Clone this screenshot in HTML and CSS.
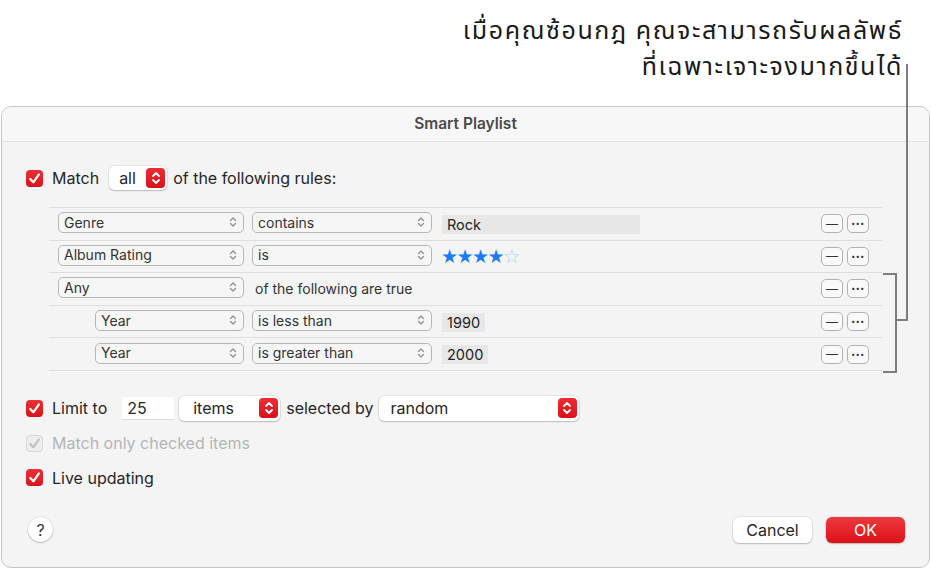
FILE: index.html
```html
<!DOCTYPE html>
<html lang="th">
  <head>
    <meta charset="UTF-8" />
    <meta name="viewport" content="width=device-width, initial-scale=1.0" />
    <title>Smart Playlist</title>
    <link rel="stylesheet" href="styles.css">
  </head>
  <body>
    <div class="callout">
      <div>เมื่อคุณซ้อนกฎ คุณจะสามารถรับผลลัพธ์</div>
      <div>ที่เฉพาะเจาะจงมากขึ้นได้</div>
    </div>

    <!-- เส้นชี้ + วงเล็บกลุ่มกฎ -->
    <div class="leader"></div>
    <div class="leader-foot"></div>
    <div class="bracket"></div>

    <div class="dialog">
      <div class="titlebar">Smart Playlist</div>

      <div class="body">
        <div class="line">
          <span class="check"><svg viewBox="0 0 18 18"><path d="M4.5 9.5 L7.8 13 L13.5 4.8" /></svg></span>
          <span class="label">Match</span>
          <span class="menu menu-all">all<span class="stepper"><svg viewBox="0 0 10 14"><path d="M2 5 L5 2 L8 5 M2 9 L5 12 L8 9" /></svg></span></span>
          <span class="label">of the following rules:</span>
        </div>

        <div class="rules">
          <div class="rule">
            <span class="popup w-field">Genre<svg viewBox="0 0 8 12"><path d="M1.5 4.5 L4 2 L6.5 4.5 M1.5 7.5 L4 10 L6.5 7.5" /></svg></span>
            <span class="popup w-op">contains<svg viewBox="0 0 8 12"><path d="M1.5 4.5 L4 2 L6.5 4.5 M1.5 7.5 L4 10 L6.5 7.5" /></svg></span>
            <span class="value value-wide">Rock</span>
            <span class="actions"><span class="mini">&#8212;</span><span class="mini dots">&#8226;&#8226;&#8226;</span></span>
          </div>
          <div class="rule">
            <span class="popup w-field">Album Rating<svg viewBox="0 0 8 12"><path d="M1.5 4.5 L4 2 L6.5 4.5 M1.5 7.5 L4 10 L6.5 7.5" /></svg></span>
            <span class="popup w-op">is<svg viewBox="0 0 8 12"><path d="M1.5 4.5 L4 2 L6.5 4.5 M1.5 7.5 L4 10 L6.5 7.5" /></svg></span>
            <span class="stars">★★★★<span class="off">☆</span></span>
            <span class="actions"><span class="mini">&#8212;</span><span class="mini dots">&#8226;&#8226;&#8226;</span></span>
          </div>
          <div class="rule">
            <span class="popup w-field">Any<svg viewBox="0 0 8 12"><path d="M1.5 4.5 L4 2 L6.5 4.5 M1.5 7.5 L4 10 L6.5 7.5" /></svg></span>
            <span class="plain">of the following are true</span>
            <span class="actions"><span class="mini">&#8212;</span><span class="mini dots">&#8226;&#8226;&#8226;</span></span>
          </div>
          <div class="rule nested">
            <span class="popup w-sub">Year<svg viewBox="0 0 8 12"><path d="M1.5 4.5 L4 2 L6.5 4.5 M1.5 7.5 L4 10 L6.5 7.5" /></svg></span>
            <span class="popup w-op">is less than<svg viewBox="0 0 8 12"><path d="M1.5 4.5 L4 2 L6.5 4.5 M1.5 7.5 L4 10 L6.5 7.5" /></svg></span>
            <span class="value">1990</span>
            <span class="actions"><span class="mini">&#8212;</span><span class="mini dots">&#8226;&#8226;&#8226;</span></span>
          </div>
          <div class="rule nested">
            <span class="popup w-sub">Year<svg viewBox="0 0 8 12"><path d="M1.5 4.5 L4 2 L6.5 4.5 M1.5 7.5 L4 10 L6.5 7.5" /></svg></span>
            <span class="popup w-op">is greater than<svg viewBox="0 0 8 12"><path d="M1.5 4.5 L4 2 L6.5 4.5 M1.5 7.5 L4 10 L6.5 7.5" /></svg></span>
            <span class="value">2000</span>
            <span class="actions"><span class="mini">&#8212;</span><span class="mini dots">&#8226;&#8226;&#8226;</span></span>
          </div>
        </div>

        <div class="line limit">
          <span class="check"><svg viewBox="0 0 18 18"><path d="M4.5 9.5 L7.8 13 L13.5 4.8" /></svg></span>
          <span class="label">Limit to</span>
          <span class="input">25</span>
          <span class="menu menu-items">items<span class="stepper"><svg viewBox="0 0 10 14"><path d="M2 5 L5 2 L8 5 M2 9 L5 12 L8 9" /></svg></span></span>
          <span class="label">selected by</span>
          <span class="menu menu-random">random<span class="stepper"><svg viewBox="0 0 10 14"><path d="M2 5 L5 2 L8 5 M2 9 L5 12 L8 9" /></svg></span></span>
        </div>

        <div class="line option disabled">
          <span class="check"><svg viewBox="0 0 18 18"><path d="M4.5 9.5 L7.8 13 L13.5 4.8" /></svg></span>
          <span class="label">Match only checked items</span>
        </div>

        <div class="line option">
          <span class="check"><svg viewBox="0 0 18 18"><path d="M4.5 9.5 L7.8 13 L13.5 4.8" /></svg></span>
          <span class="label">Live updating</span>
        </div>

        <div class="footer">
          <span class="help">?</span>
          <div class="buttons">
            <span class="btn">Cancel</span>
            <span class="btn btn-ok">OK</span>
          </div>
        </div>
      </div>
    </div>
  </body>
</html>
```

FILE: styles.css
```css
body {
  margin: 0;
  width: 931px;
  height: 569px;
  background: #ffffff;
  font-family: "Inter", "Liberation Sans", sans-serif;
  color: #262626;
  overflow: hidden;
  position: relative;
}

/* 설명 문구 */
.callout {
  box-sizing: border-box;
  height: 106px;
  padding: 13px 28px 0 0;
  display: flex;
  flex-direction: column;
  align-items: flex-end;
  font-family: "Noto Sans Thai", "Noto Sans", "DejaVu Sans", sans-serif;
  font-size: 25px;
  line-height: 36px;
  letter-spacing: 1.6px;
  color: #1a1a1a;
}

/* 주석 선 (콘텐츠 위에 겹침) */
.leader {
  position: absolute;
  left: 906px;
  top: 64px;
  width: 2px;
  height: 257px;
  background: #7d7d7d;
}

.leader-foot {
  position: absolute;
  left: 895px;
  top: 319px;
  width: 13px;
  height: 2px;
  background: #7d7d7d;
}

.bracket {
  position: absolute;
  left: 883px;
  top: 273px;
  width: 12px;
  height: 96px;
  border: 2px solid #7d7d7d;
  border-left: none;
}

.dialog {
  box-sizing: border-box;
  margin: 0 1px;
  height: 462px;
  border: 1px solid #c6c6c6;
  border-radius: 10px;
  background: #f4f4f4;
  overflow: hidden;
}

.titlebar {
  height: 34px;
  line-height: 33px;
  border-bottom: 1px solid #e1e1e1;
  background: #f7f7f7;
  text-align: center;
  font-size: 15.5px;
  font-weight: 600;
  color: #4a4a4a;
}

.body {
  padding: 0 24px;
  font-size: 16px;
}

.line {
  display: flex;
  align-items: center;
  height: 24px;
  margin-top: 24px;
}

.line.limit {
  height: 25px;
  margin-top: 25px;
}

.line.option {
  margin-top: 10.5px;
}

.check {
  width: 17px;
  height: 17px;
  border-radius: 4px;
  background: linear-gradient(#ec3036, #d9141c);
  display: flex;
  margin-right: 9px;
  flex-shrink: 0;
}

.check svg {
  width: 17px;
  height: 17px;
  fill: none;
  stroke: #fff;
  stroke-width: 2.4;
  stroke-linecap: round;
  stroke-linejoin: round;
}

.disabled .check {
  box-sizing: border-box;
  background: #ededed;
  border: 1px solid #d8d8d8;
}

.disabled .check svg {
  stroke: #c2c2c2;
  margin: -1px;
}

.disabled .label {
  color: #b4b4b4;
}

.label {
  white-space: nowrap;
}

/* 빨간 스테퍼가 있는 흰 메뉴 */
.menu {
  box-sizing: border-box;
  display: flex;
  align-items: center;
  justify-content: space-between;
  height: 24px;
  padding: 0 2px 0 10px;
  margin: 0 6px;
  background: #ffffff;
  border-radius: 5px;
  box-shadow: 0 0 0 0.5px rgba(0, 0, 0, 0.12), 0 1px 1.5px rgba(0, 0, 0, 0.18);
}

.menu-all {
  width: 58px;
  margin-left: 10px;
}

.menu-items {
  width: 101px;
  height: 25px;
  margin-left: 5px;
  padding-left: 14px;
}

.menu-random {
  width: 200px;
  height: 25px;
  margin-left: 5px;
  padding-left: 12px;
}

.stepper {
  width: 19px;
  height: 20px;
  border-radius: 4px;
  background: linear-gradient(#ee2d33, #d9121a);
  display: flex;
  align-items: center;
  justify-content: center;
}

.stepper svg {
  width: 10px;
  height: 14px;
  fill: none;
  stroke: #fff;
  stroke-width: 1.8;
  stroke-linecap: round;
  stroke-linejoin: round;
}

.input {
  box-sizing: border-box;
  width: 52px;
  height: 23px;
  margin-left: 15px;
  padding-left: 5px;
  line-height: 23px;
  background: #ffffff;
  border-bottom: 1px solid #dcdcdc;
}

/* 규칙 목록 */
.rules {
  margin: 17px 23px 0;
  border-top: 1px solid #dedede;
}

.rule {
  box-sizing: border-box;
  height: 32.6px;
  display: flex;
  align-items: center;
  padding: 0 13px 0 9px;
  border-bottom: 1px solid #dedede;
  font-size: 14px;
}

.rule.nested {
  padding-left: 46px;
}

.popup {
  box-sizing: border-box;
  display: flex;
  align-items: center;
  justify-content: space-between;
  height: 21px;
  padding: 0 6px 1px 5px;
  margin-right: 8px;
  margin-top: -2px;
  border: 1px solid #b6b6b6;
  border-radius: 5px;
  background: #f6f6f6;
  color: #333;
  white-space: nowrap;
}

.popup svg {
  width: 8px;
  height: 12px;
  fill: none;
  stroke: #8e8e8e;
  stroke-width: 1.2;
  stroke-linecap: round;
  stroke-linejoin: round;
}

.w-field {
  width: 186px;
}

.w-sub {
  width: 149px;
}

.w-op {
  width: 180px;
}

.value {
  box-sizing: border-box;
  height: 19px;
  line-height: 20px;
  margin-left: 2px;
  margin-top: 1px;
  padding: 0 5px;
  background: #e7e7e7;
  font-size: 14.5px;
  color: #222;
}

.value-wide {
  width: 198px;
}

.stars {
  margin-left: 1px;
  font-family: "DejaVu Sans", sans-serif;
  font-size: 19px;
  letter-spacing: -1.5px;
  color: #1a7cf4;
}

.stars .off {
  color: #a9cdf8;
}

.plain {
  margin-left: 3px;
  font-size: 14px;
  color: #333;
}

.actions {
  margin-left: auto;
  display: flex;
  gap: 4px;
}

.mini {
  box-sizing: border-box;
  width: 22px;
  height: 19px;
  border: 1px solid #b2b2b2;
  border-radius: 5px;
  background: #f9f9f9;
  display: flex;
  align-items: center;
  justify-content: center;
  font-size: 12px;
  line-height: 1;
  color: #333;
}

.mini.dots {
  font-size: 7px;
  letter-spacing: 0.5px;
}

/* 하단 버튼 */
.footer {
  display: flex;
  align-items: center;
  justify-content: space-between;
  margin-top: 27px;
  padding-left: 2px;
}

.help {
  width: 25px;
  height: 25px;
  border-radius: 50%;
  background: #ffffff;
  box-shadow: 0 0 0 0.5px rgba(0, 0, 0, 0.12), 0 1px 1.5px rgba(0, 0, 0, 0.2);
  display: flex;
  align-items: center;
  justify-content: center;
  font-size: 16px;
  color: #333;
}

.buttons {
  display: flex;
  gap: 14px;
}

.btn {
  box-sizing: border-box;
  width: 79px;
  height: 26px;
  border-radius: 6px;
  background: #ffffff;
  box-shadow: 0 0 0 0.5px rgba(0, 0, 0, 0.12), 0 1px 1.5px rgba(0, 0, 0, 0.2);
  display: flex;
  align-items: center;
  justify-content: center;
  font-size: 16px;
  color: #262626;
}

.btn-ok {
  background: linear-gradient(#ec3a40, #dd1219);
  color: #ffffff;
}
```
